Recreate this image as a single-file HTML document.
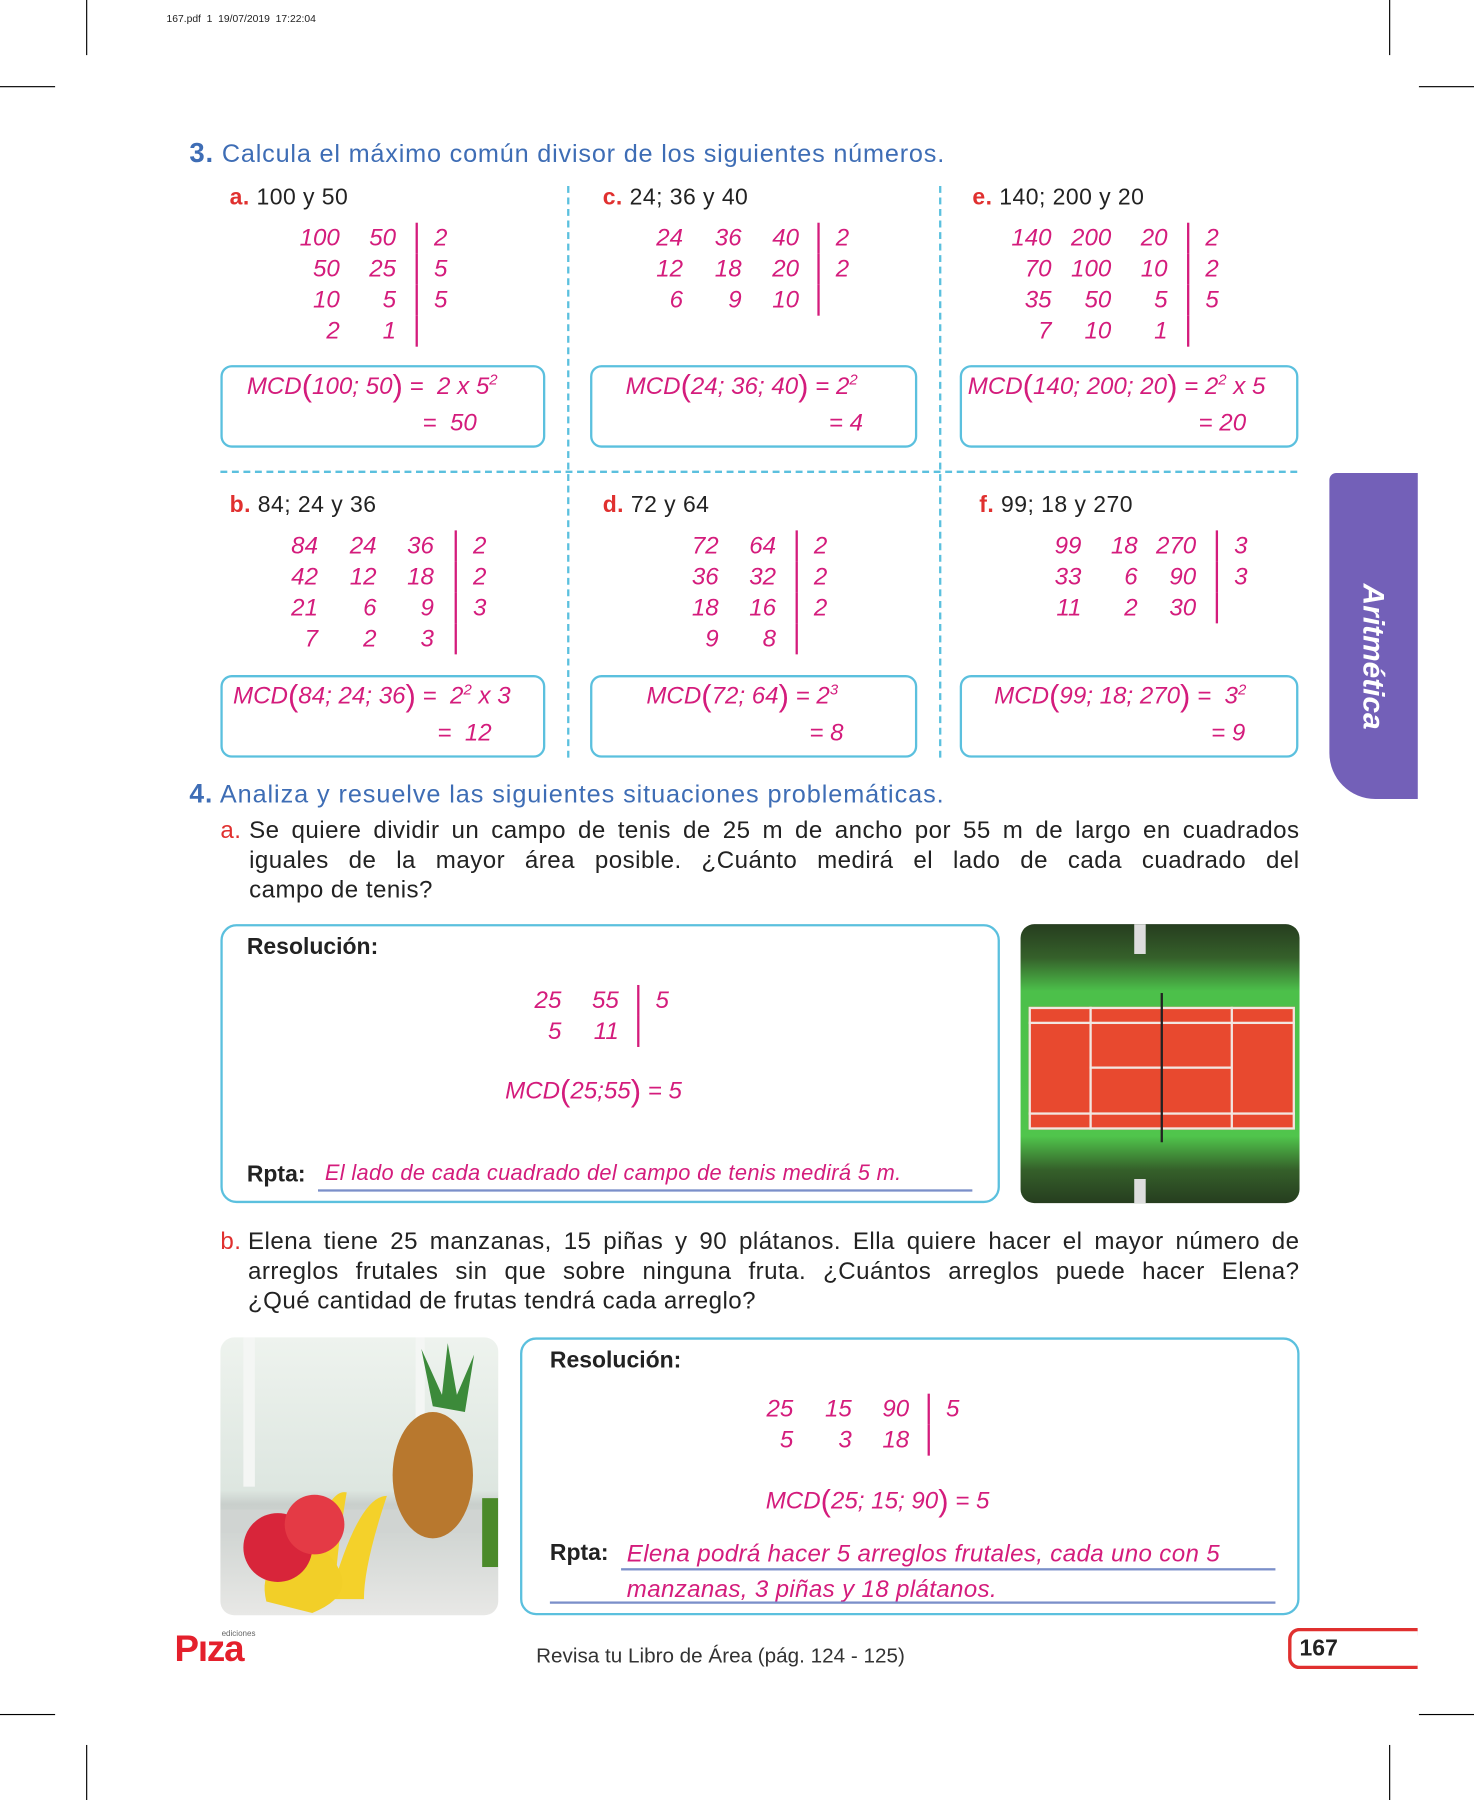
<!DOCTYPE html>
<html><head><meta charset="utf-8"><style>
*{margin:0;padding:0;box-sizing:border-box}
body{width:1474px;height:1800px;overflow:hidden;background:#fff}
#p{position:absolute;left:0;top:0;width:1284px;height:1568px;transform:scale(1.148);transform-origin:0 0;font-family:"Liberation Sans",sans-serif;color:#222}
.a{position:absolute;white-space:nowrap}
.m{color:#d41c7c;font-style:italic;font-size:21px}
.h{font-size:20px;line-height:22px;letter-spacing:0.4px}
.r{color:#e0302f;font-weight:bold}
.bl{color:#3e6db5}
table{position:absolute;border-collapse:collapse;color:#d41c7c;font-style:italic;font-size:21px}
td{text-align:right;padding:0;height:27px;line-height:27px}
td.d{border-left:2px solid #d41c7c;text-align:left;padding-left:14px;width:40px}
.box{position:absolute;border:2px solid #5bc0de;border-radius:10px}
.ln{position:absolute;background:#000}
.big{font-size:27px;font-style:normal;font-weight:300;vertical-align:-2px}
sup{font-size:13px}
.j{position:absolute;font-size:21px;line-height:26px;letter-spacing:0.4px;text-align:justify;text-align-last:justify;white-space:nowrap}
.jl{position:absolute;font-size:21px;line-height:26px;letter-spacing:0.4px;white-space:nowrap}
</style></head><body><div id="p">
<div class="a" style="left:145px;top:11px;font-size:9px">167.pdf&nbsp; 1&nbsp; 19/07/2019&nbsp; 17:22:04</div>
<div class="ln" style="left:75px;top:0;width:1px;height:48px"></div>
<div class="ln" style="left:1210px;top:0;width:1px;height:48px"></div>
<div class="ln" style="left:0;top:75px;width:48px;height:1px"></div>
<div class="ln" style="left:1236px;top:75px;width:48px;height:1px"></div>
<div class="ln" style="left:0;top:1493px;width:48px;height:1px"></div>
<div class="ln" style="left:1236px;top:1493px;width:48px;height:1px"></div>
<div class="ln" style="left:75px;top:1520px;width:1px;height:48px"></div>
<div class="ln" style="left:1210px;top:1520px;width:1px;height:48px"></div>

<div class="a bl" style="left:165px;top:120px;font-size:22px;letter-spacing:0.7px"><b style="font-size:24px">3.</b> Calcula el máximo común divisor de los siguientes números.</div>

<div class="a" style="left:494px;top:162px;height:498px;border-left:2px dashed #5bc0de"></div>
<div class="a" style="left:818px;top:162px;height:498px;border-left:2px dashed #5bc0de"></div>
<div class="a" style="left:192px;top:410px;width:938px;border-top:2px dashed #5bc0de"></div>

<div class="a h" style="left:200px;top:161px"><span class="r">a.</span> 100 y 50</div>
<div class="a h" style="left:525px;top:161px"><span class="r">c.</span> 24; 36 y 40</div>
<div class="a h" style="left:847px;top:161px"><span class="r">e.</span> 140; 200 y 20</div>
<div class="a h" style="left:200px;top:429px"><span class="r">b.</span> 84; 24 y 36</div>
<div class="a h" style="left:525px;top:429px"><span class="r">d.</span> 72 y 64</div>
<div class="a h" style="left:853px;top:429px"><span class="r">f.</span> 99; 18 y 270</div>

<table style="left:250px;top:194px"><tr><td style="width:46px">100</td><td style="width:67px;padding-right:17px">50</td><td class="d">2</td></tr><tr><td>50</td><td style="padding-right:17px">25</td><td class="d">5</td></tr><tr><td>10</td><td style="padding-right:17px">5</td><td class="d">5</td></tr><tr><td>2</td><td style="padding-right:17px">1</td><td class="d"></td></tr></table>
<table style="left:560px;top:194px"><tr><td style="width:35px">24</td><td style="width:51px">36</td><td style="width:67px;padding-right:16px">40</td><td class="d">2</td></tr><tr><td>12</td><td>18</td><td style="padding-right:16px">20</td><td class="d">2</td></tr><tr><td>6</td><td>9</td><td style="padding-right:16px">10</td><td class="d"></td></tr></table>
<table style="left:875px;top:194px"><tr><td style="width:41px">140</td><td style="width:52px">200</td><td style="width:67px;padding-right:17px">20</td><td class="d">2</td></tr><tr><td>70</td><td>100</td><td style="padding-right:17px">10</td><td class="d">2</td></tr><tr><td>35</td><td>50</td><td style="padding-right:17px">5</td><td class="d">5</td></tr><tr><td>7</td><td>10</td><td style="padding-right:17px">1</td><td class="d"></td></tr></table>
<table style="left:245px;top:462px"><tr><td style="width:32px">84</td><td style="width:51px">24</td><td style="width:69px;padding-right:18px">36</td><td class="d">2</td></tr><tr><td>42</td><td>12</td><td style="padding-right:18px">18</td><td class="d">2</td></tr><tr><td>21</td><td>6</td><td style="padding-right:18px">9</td><td class="d">3</td></tr><tr><td>7</td><td>2</td><td style="padding-right:18px">3</td><td class="d"></td></tr></table>
<table style="left:595px;top:462px"><tr><td style="width:31px">72</td><td style="width:68px;padding-right:17px">64</td><td class="d">2</td></tr><tr><td>36</td><td style="padding-right:17px">32</td><td class="d">2</td></tr><tr><td>18</td><td style="padding-right:17px">16</td><td class="d">2</td></tr><tr><td>9</td><td style="padding-right:17px">8</td><td class="d"></td></tr></table>
<table style="left:910px;top:462px"><tr><td style="width:32px">99</td><td style="width:49px">18</td><td style="width:69px;padding-right:17px">270</td><td class="d">3</td></tr><tr><td>33</td><td>6</td><td style="padding-right:17px">90</td><td class="d">3</td></tr><tr><td>11</td><td>2</td><td style="padding-right:17px">30</td><td class="d"></td></tr></table>

<div class="box" style="left:192px;top:318px;width:283px;height:72px"></div>
<div class="box" style="left:514px;top:318px;width:285px;height:72px"></div>
<div class="box" style="left:836px;top:318px;width:295px;height:72px"></div>
<div class="box" style="left:192px;top:588px;width:283px;height:72px"></div>
<div class="box" style="left:514px;top:588px;width:285px;height:72px"></div>
<div class="box" style="left:836px;top:588px;width:295px;height:72px"></div>

<div class="a m" style="left:215px;top:321px">MCD<span class="big">(</span>100; 50<span class="big">)</span> = &nbsp;2 x 5<sup>2</sup></div>
<div class="a m" style="left:368px;top:357px">= &nbsp;50</div>
<div class="a m" style="left:545px;top:321px">MCD<span class="big">(</span>24; 36; 40<span class="big">)</span> = 2<sup>2</sup></div>
<div class="a m" style="left:722px;top:357px">= 4</div>
<div class="a m" style="left:843px;top:321px">MCD<span class="big">(</span>140; 200; 20<span class="big">)</span> = 2<sup>2</sup> x 5</div>
<div class="a m" style="left:1044px;top:357px">= 20</div>
<div class="a m" style="left:203px;top:591px">MCD<span class="big">(</span>84; 24; 36<span class="big">)</span> = &nbsp;2<sup>2</sup> x 3</div>
<div class="a m" style="left:381px;top:627px">= &nbsp;12</div>
<div class="a m" style="left:563px;top:591px">MCD<span class="big">(</span>72; 64<span class="big">)</span> = 2<sup>3</sup></div>
<div class="a m" style="left:705px;top:627px">= 8</div>
<div class="a m" style="left:866px;top:591px">MCD<span class="big">(</span>99; 18; 270<span class="big">)</span> = &nbsp;3<sup>2</sup></div>
<div class="a m" style="left:1055px;top:627px">= 9</div>

<div class="a" style="left:1158px;top:412px;width:77px;height:284px;background:#7360b8;border-radius:6px 0 0 40px"></div>
<div class="a" style="left:1196px;top:572px;transform:translate(-50%,-50%) rotate(90deg);color:#fff;font-weight:bold;font-style:italic;font-size:26px">Aritmética</div>

<div class="a bl" style="left:165px;top:678px;font-size:22px;letter-spacing:0.8px"><b style="font-size:23px">4.</b> Analiza y resuelve las siguientes situaciones problemáticas.</div>

<div class="jl" style="left:192px;top:711px;color:#e0302f">a.</div>
<div class="j" style="left:217px;top:711px;width:915px">Se quiere dividir un campo de tenis de 25 m de ancho por 55 m de largo en cuadrados</div>
<div class="j" style="left:217px;top:737px;width:915px">iguales de la mayor área posible. ¿Cuánto medirá el lado de cada cuadrado del</div>
<div class="jl" style="left:217px;top:763px">campo de tenis?</div>

<div class="box" style="left:192px;top:805px;width:679px;height:243px;border-radius:14px"></div>
<div class="a" style="left:215px;top:814px;font-size:20px;font-weight:bold">Resolución:</div>
<table style="left:460px;top:858px"><tr><td style="width:29px">25</td><td style="width:67px;padding-right:16px">55</td><td class="d">5</td></tr><tr><td>5</td><td style="padding-right:16px">11</td><td class="d"></td></tr></table>
<div class="a m" style="left:440px;top:935px">MCD<span class="big">(</span>25;55<span class="big">)</span> = 5</div>
<div class="a" style="left:215px;top:1012px;font-size:20px;font-weight:bold">Rpta:</div>
<div class="a m" style="left:283px;top:1012px;font-size:19px;letter-spacing:0.3px">El lado de cada cuadrado del campo de tenis medirá 5 m.</div>
<div class="a" style="left:277px;top:1036px;width:570px;height:2px;background:#7b8fc9"></div>

<div class="a" style="left:889px;top:805px;width:243px;height:243px;border-radius:12px;overflow:hidden;background:linear-gradient(#263d1f 0,#35602a 12%,#4cc04a 24%,#50c54c 76%,#35602a 88%,#263d1f 100%)">
<div class="a" style="left:7px;top:72px;width:232px;height:107px;background:#e8492f;border:2px solid #f2e6e0"></div>
<div class="a" style="left:60px;top:72px;width:2px;height:107px;background:#f2e6e0"></div>
<div class="a" style="left:183px;top:72px;width:2px;height:107px;background:#f2e6e0"></div>
<div class="a" style="left:60px;top:124px;width:124px;height:2px;background:#f2e6e0"></div>
<div class="a" style="left:7px;top:85px;width:232px;height:2px;background:#f2e6e0"></div>
<div class="a" style="left:7px;top:164px;width:232px;height:2px;background:#f2e6e0"></div>
<div class="a" style="left:122px;top:60px;width:2px;height:130px;background:#222"></div>
<div class="a" style="left:99px;top:0;width:10px;height:26px;background:#ddd"></div>
<div class="a" style="left:99px;top:222px;width:10px;height:21px;background:#ddd"></div>
</div>

<div class="jl" style="left:192px;top:1069px;color:#e0302f">b.</div>
<div class="j" style="left:216px;top:1069px;width:916px">Elena tiene 25 manzanas, 15 piñas y 90 plátanos. Ella quiere hacer el mayor número de</div>
<div class="j" style="left:216px;top:1095px;width:916px">arreglos frutales sin que sobre ninguna fruta. ¿Cuántos arreglos puede hacer Elena?</div>
<div class="jl" style="left:216px;top:1121px">¿Qué cantidad de frutas tendrá cada arreglo?</div>

<div class="a" style="left:192px;top:1165px;width:242px;height:242px;border-radius:12px;overflow:hidden;background:linear-gradient(#eef3ee,#dde6e0 55%,#c9cfcc 60%,#e8e8e6 100%)">
<svg width="242" height="242" style="position:absolute;left:0;top:0">
<rect x="20" y="0" width="10" height="130" fill="#f4f6f4"/><rect x="170" y="0" width="8" height="130" fill="#f4f6f4"/>
<rect x="0" y="150" width="242" height="20" fill="#d0d4d2"/>
<path d="M185 60 l-10 -50 l18 40 l5 -45 l8 45 l15 -35 l-8 50 z" fill="#3c8a3a"/>
<ellipse cx="185" cy="120" rx="35" ry="55" fill="#b8782e"/>
<path d="M70 220 q20 -90 40 -85 q-10 60 -10 90 z M95 228 q25 -90 50 -90 q-20 60 -20 90z" fill="#f4d12a"/>
<path d="M40 230 q-10 -40 45 -50 q45 40 -5 60z" fill="#f2cf28"/>
<circle cx="50" cy="183" r="30" fill="#d8253a"/><circle cx="82" cy="163" r="26" fill="#e43a45"/>
<rect x="228" y="140" width="14" height="60" fill="#4b8a2a"/>
</svg></div>

<div class="box" style="left:453px;top:1165px;width:679px;height:242px;border-radius:14px"></div>
<div class="a" style="left:479px;top:1174px;font-size:20px;font-weight:bold">Resolución:</div>
<table style="left:662px;top:1214px"><tr><td style="width:29px">25</td><td style="width:51px">15</td><td style="width:67px;padding-right:16px">90</td><td class="d">5</td></tr><tr><td>5</td><td>3</td><td style="padding-right:16px">18</td><td class="d"></td></tr></table>
<div class="a m" style="left:667px;top:1292px">MCD<span class="big">(</span>25; 15; 90<span class="big">)</span> = 5</div>
<div class="a" style="left:479px;top:1342px;font-size:20px;font-weight:bold">Rpta:</div>
<div class="a m" style="left:546px;top:1342px;letter-spacing:0.3px">Elena podrá hacer 5 arreglos frutales, cada uno con 5</div>
<div class="a" style="left:541px;top:1366px;width:570px;height:2px;background:#7b8fc9"></div>
<div class="a m" style="left:546px;top:1373px;letter-spacing:0.3px">manzanas, 3 piñas y 18 plátanos.</div>
<div class="a" style="left:479px;top:1395px;width:632px;height:2px;background:#7b8fc9"></div>

<div class="a" style="left:152px;top:1418px;font-size:32px;font-weight:bold;color:#e4202c;letter-spacing:-1px">Pıza</div>
<div class="a" style="left:193px;top:1420px;font-size:7px;color:#666">ediciones</div>
<div class="a" style="left:467px;top:1432px;font-size:18px;color:#333">Revisa tu Libro de Área (pág. 124 - 125)</div>
<div class="a" style="left:1122px;top:1418px;width:113px;height:36px;border:3px solid #e0302f;border-right:none;border-radius:10px 0 0 10px"></div>
<div class="a" style="left:1132px;top:1425px;font-size:20px;font-weight:bold">167</div>
</div></body></html>
